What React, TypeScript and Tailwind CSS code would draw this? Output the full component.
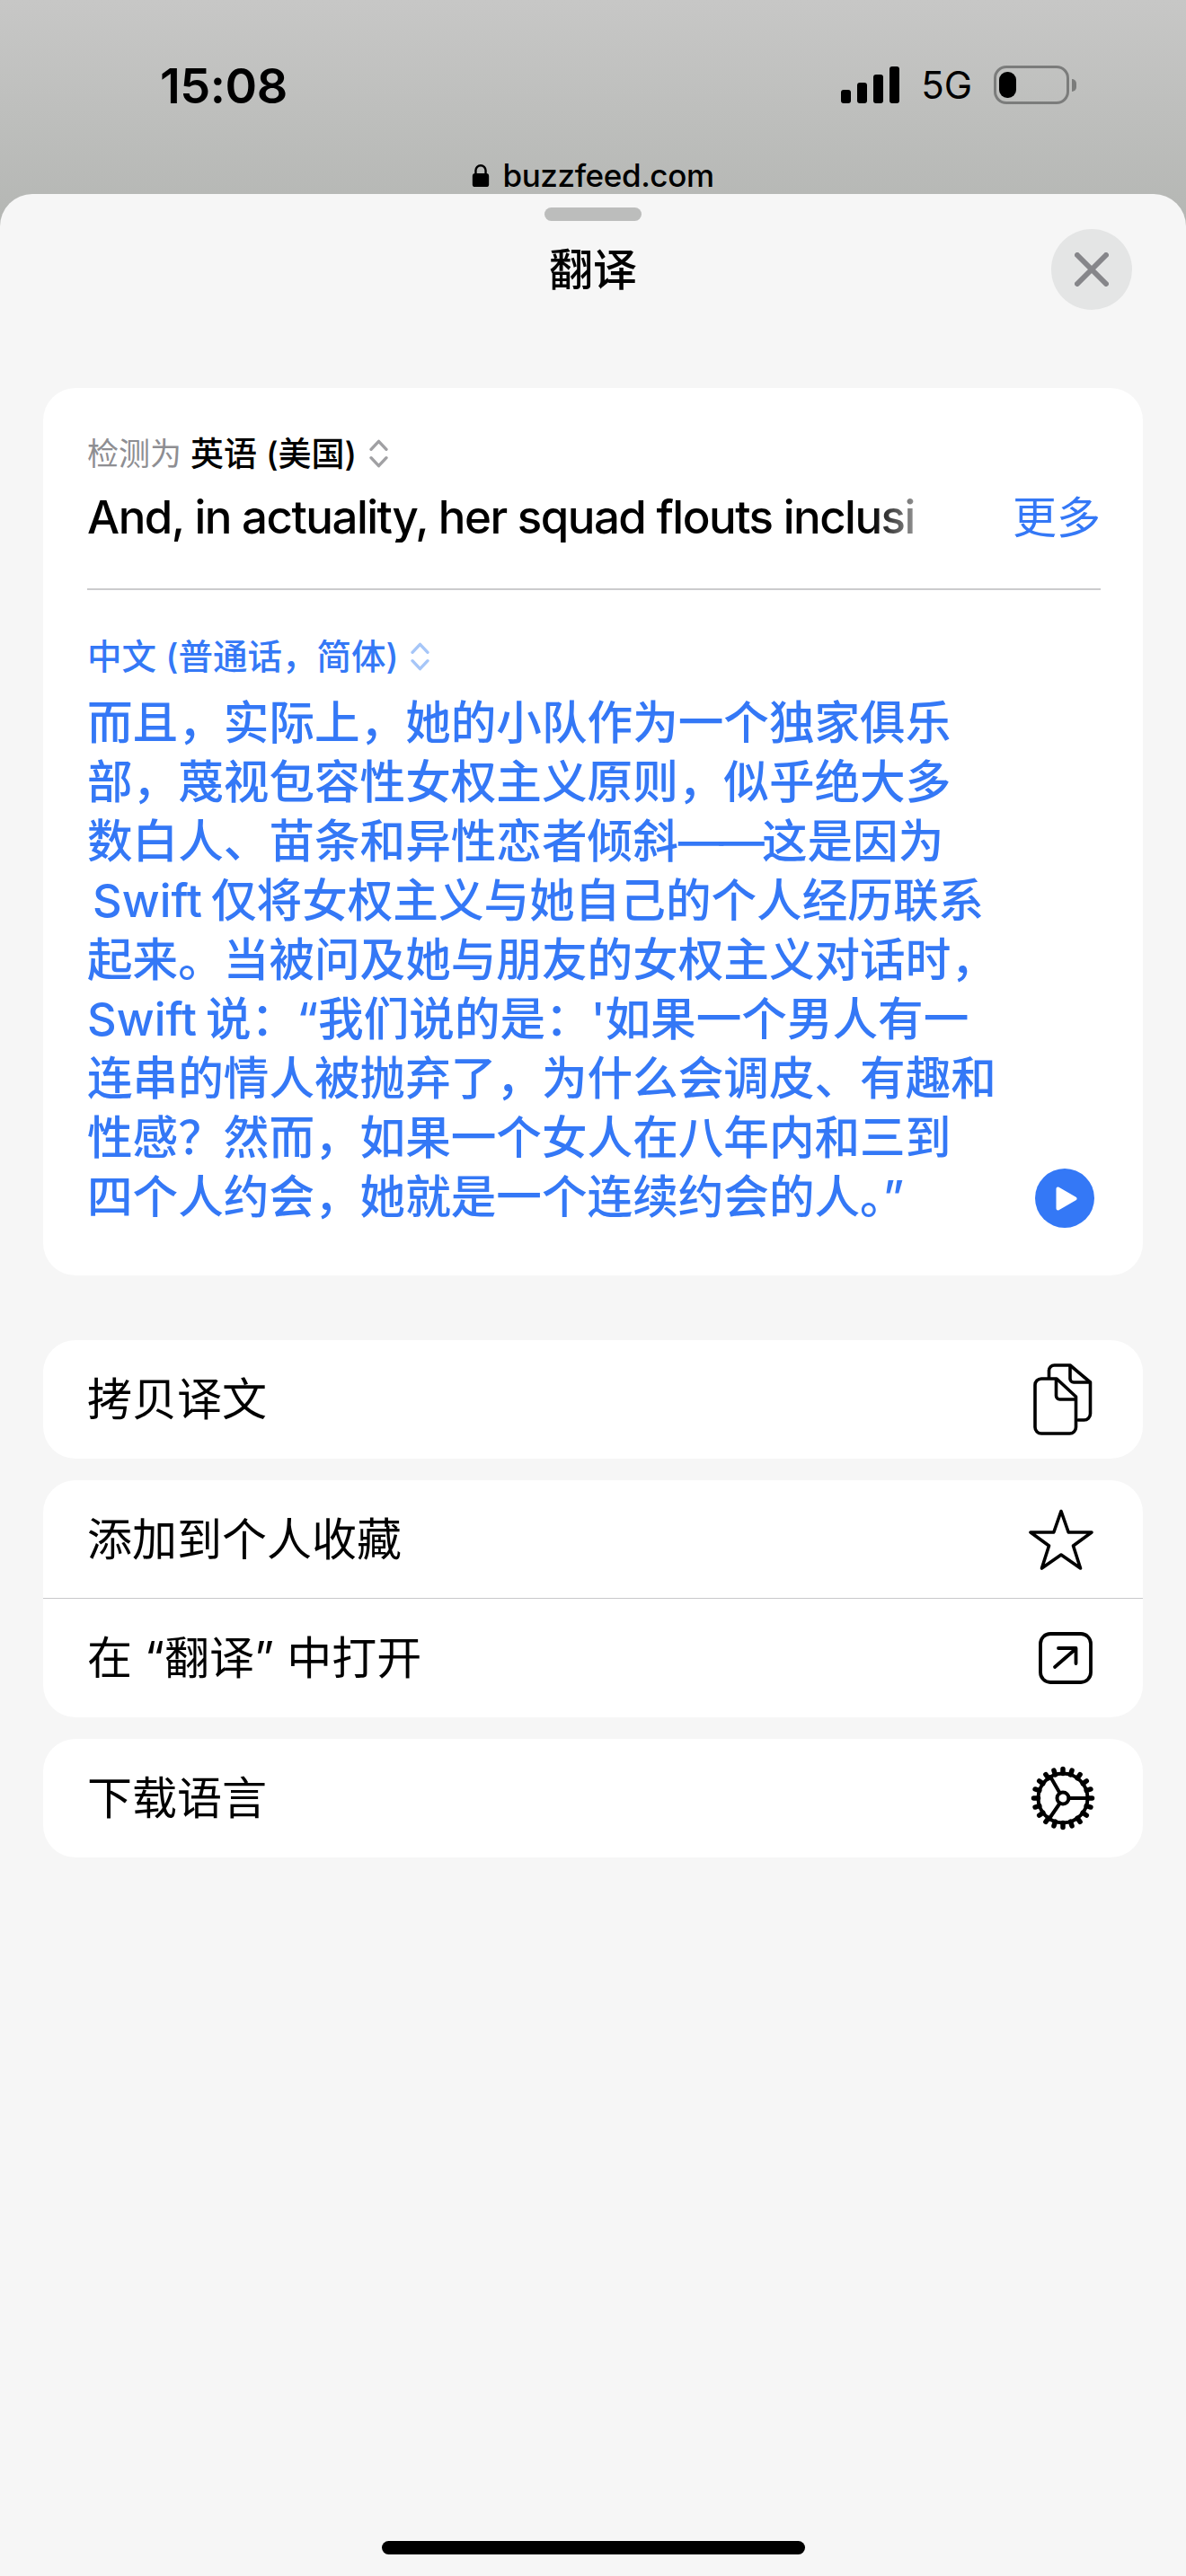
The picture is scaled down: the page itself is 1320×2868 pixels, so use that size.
import type { ReactNode } from "react";

const FONT = "font-['Inter','Noto_Sans_CJK_SC',sans-serif]";

const TRANSLATION: ReactNode[] = [
  "而且，实际上，她的小队作为一个独家俱乐",
  "部，蔑视包容性女权主义原则，似乎绝大多",
  <>数白人、苗条和异性恋者倾斜<span className="tracking-[-5px]">——</span><span className="ml-[2px]">这是因为</span></>,
  <><span className="ml-[6px] mr-[10px]">Swift</span>仅将女权主义与她自己的个人经历联系</>,
  "起来。当被问及她与朋友的女权主义对话时，",
  <><span className="mr-[10px]">Swift</span>说：“我们说的是：'如果一个男人有一</>,
  "连串的情人被抛弃了，为什么会调皮、有趣和",
  "性感？然而，如果一个女人在八年内和三到",
  "四个人约会，她就是一个连续约会的人。”",
];

function Chevrons({ className }: { className: string }) {
  return (
    <svg viewBox="0 0 24 34" className={className} fill="none" stroke="currentColor" strokeWidth="3.6" strokeLinecap="round" strokeLinejoin="round">
      <path d="M3 12 12 2.500l9 9.500M3 22l9 9.500L21 22" />
    </svg>
  );
}

function CopyIcon() {
  return (
    <svg viewBox="0 0 66 80" className="h-[80px] w-[66px]" fill="none" stroke="black" strokeWidth="3.6" strokeLinejoin="round" strokeLinecap="round">
      <path d="M17.500 16V8a6 6 0 0 1 6-6H41L63.500 21V56a7 7 0 0 1-7 7H50" />
      <path d="M41 3V17a4 4 0 0 0 4 4H63" />
      <path d="M2 24a7 7 0 0 1 7-7H26L47.500 37V71a7 7 0 0 1-7 7H9a7 7 0 0 1-7-7Z" />
      <path d="M25.500 18V36a4 4 0 0 0 4 4H47" />
    </svg>
  );
}

function StarIcon() {
  return (
    <svg viewBox="0 0 72 68" className="h-[68px] w-[72px]" fill="none" stroke="black" strokeWidth="3.6" strokeLinejoin="round">
      <path d="M36 2.500 44.200 26H70L49.500 41 57.500 66 36 51 14.500 66 22.500 41 2 26H27.800Z" />
    </svg>
  );
}

function OpenIcon() {
  return (
    <svg viewBox="0 0 60 58" className="h-[58px] w-[60px]" fill="none" stroke="black" strokeWidth="3.800" strokeLinecap="round" strokeLinejoin="round">
      <rect x="2" y="2" width="56" height="54" rx="11" />
      <path d="M18 39 41 19M22 18h19.500v17" />
    </svg>
  );
}

function GearIcon() {
  const teeth = Array.from({ length: 20 }, (_, i) => (i * 360) / 20);
  return (
    <svg viewBox="0 0 72 72" className="h-[72px] w-[72px]" fill="none" stroke="black" strokeWidth="4" strokeLinecap="round">
      {teeth.map((a) => (
        <path key={a} d="M36 3.500v5" strokeWidth="5.500" transform={`rotate(${a} 36 36)`} />
      ))}
      <circle cx="36" cy="36" r="27.500" />
      <circle cx="36" cy="36" r="6.500" />
      <path d="M42.500 36H63M32.700 30.500 22 12M32.700 41.500 20 60" />
    </svg>
  );
}

function ActionRow({ label, icon, iconBox }: { label: string; icon: ReactNode; iconBox: string }) {
  return (
    <div className="flex h-[132px] items-center justify-between pl-[49px]">
      <span className="text-[50px] leading-none text-black">{label}</span>
      <span className={iconBox}>{icon}</span>
    </div>
  );
}

export default function App() {
  return (
    <div className={`${FONT} flex h-[2868px] w-[1320px] flex-col overflow-hidden bg-[#b5b7b4]`}>
      {/* status bar */}
      <div className="-mb-[40px] flex h-[256px] shrink-0 flex-col bg-gradient-to-b from-[#c7c7c6] to-[#b4b6b3]">
        <div className="flex h-[179px] items-start justify-between pl-[178px] pr-[122px] pt-[64px]">
          <span className="text-[54px] font-semibold leading-[64px] tracking-[-0.5px] text-black">15:08</span>
          <div className="flex items-center gap-[24px] pt-[9px]">
            <div className="flex h-[41px] items-end gap-[7px]">
              <span className="h-[15px] w-[11px] rounded-[3px] bg-black" />
              <span className="h-[23px] w-[11px] rounded-[3px] bg-black" />
              <span className="h-[32px] w-[11px] rounded-[3px] bg-black" />
              <span className="h-[41px] w-[11px] rounded-[3px] bg-black" />
            </div>
            <span className="text-[42px] leading-none text-black">5G</span>
            <div className="flex items-center gap-[3px]">
              <div className="flex h-[43px] w-[84px] items-center rounded-[14px] border-[3px] border-[#7b7c7b] px-[3px]">
                <span className="h-[29px] w-[19px] rounded-[9px] bg-black" />
              </div>
              <span className="h-[14px] w-[5px] rounded-r-full bg-[#7b7c7b]" />
            </div>
          </div>
        </div>
        <div className="flex h-[32px] items-center justify-center gap-[14px]">
          <svg viewBox="0 0 20 28" className="h-[27px] w-[20px]" fill="black">
            <path d="M3 12V8a7 7 0 0 1 14 0v4h-2.500V8a4.500 4.500 0 0 0-9 0v4Z" />
            <rect x="0.500" y="11.500" width="19" height="15.500" rx="3" />
          </svg>
          <span className="text-[35px] font-medium leading-none tracking-[-0.4px] text-black">buzzfeed.com</span>
        </div>
      </div>

      {/* sheet */}
      <div className="relative flex min-h-0 flex-1 flex-col rounded-t-[36px] bg-[#f6f6f6] px-[48px]">
        <div className="mx-auto mt-[15px] h-[15px] w-[108px] shrink-0 rounded-full bg-[#bcbdbc]" />

        <div className="relative mt-[30px] flex h-[48px] shrink-0 items-center justify-center">
          <span className="text-[49px] font-medium leading-none text-black">翻译</span>
          <button className="absolute right-[12px] top-[-21px] flex h-[90px] w-[90px] items-center justify-center rounded-full bg-[#e4e5e5]">
            <svg viewBox="0 0 38 38" className="h-[38px] w-[38px]" fill="none" stroke="#86868a" strokeWidth="6" strokeLinecap="round">
              <path d="M3 3 35 35M35 3 3 35" />
            </svg>
          </button>
        </div>

        {/* translation card */}
        <div className="mt-[108px] h-[988px] shrink-0 rounded-[36px] bg-white pl-[49px] pr-[47px] pt-[51px]">
          <div className="flex h-[44px] items-center leading-none">
            <span className="text-[35px] text-[#8e8e92]">检测为</span>
            <span className="ml-[10px] text-[37px] font-medium text-black">英语 (美国)</span>
            <Chevrons className="ml-[13px] h-[32px] w-[23px] text-[#a0a0a3]" />
          </div>
          <div className="mt-[21px] flex h-[56px] items-center justify-between">
            <span className="w-[958px] overflow-hidden whitespace-nowrap text-[51px] font-medium leading-[56px] tracking-[-1.5px] text-black [mask-image:linear-gradient(to_right,black_91%,transparent_100%)]">
              And, in actuality, her squad flouts inclusi
            </span>
            <span className="text-[49px] leading-none text-[#3478f6]">更多</span>
          </div>
          <div className="mt-[51px] h-[2px] bg-[#cbcbcd]" />

          <div className="mt-[52px] flex h-[44px] items-center text-[38.500px] font-medium leading-none text-[#3478f6]">
            <span>中文 (普通话，简体)</span>
            <Chevrons className="ml-[12px] h-[32px] w-[23px] text-[#a6c6f8]" />
          </div>

          <div className="relative mt-[19px] text-[50.600px] font-medium leading-[66px] text-[#3478f6]">
            {TRANSLATION.map((line, i) => (
              <div key={i} className="whitespace-pre">{line}</div>
            ))}
            <button className="absolute bottom-[-1px] right-[7px] flex h-[66px] w-[66px] items-center justify-center rounded-full bg-[#3478f6]">
              <svg viewBox="0 0 24 27" className="ml-[4px] h-[27px] w-[24px]" fill="white" stroke="white" strokeWidth="4" strokeLinejoin="round">
                <path d="M2.500 2.500V24.500L21.500 13.500Z" />
              </svg>
            </button>
          </div>
        </div>

        {/* actions */}
        <div className="mt-[72px] shrink-0 rounded-[36px] bg-white">
          <ActionRow label="拷贝译文" icon={<CopyIcon />} iconBox="flex pr-[56px]" />
        </div>
        <div className="mt-[24px] shrink-0 divide-y divide-[#c8c8ca] rounded-[36px] bg-white">
          <ActionRow label="添加到个人收藏" icon={<StarIcon />} iconBox="flex pr-[55px]" />
          <ActionRow label="在 “翻译” 中打开" icon={<OpenIcon />} iconBox="flex pr-[56px]" />
        </div>
        <div className="mt-[24px] shrink-0 rounded-[36px] bg-white">
          <ActionRow label="下载语言" icon={<GearIcon />} iconBox="flex pr-[53px]" />
        </div>

        <div className="mx-auto mb-[24px] mt-auto h-[15px] w-[471px] shrink-0 rounded-full bg-black" />
      </div>
    </div>
  );
}
